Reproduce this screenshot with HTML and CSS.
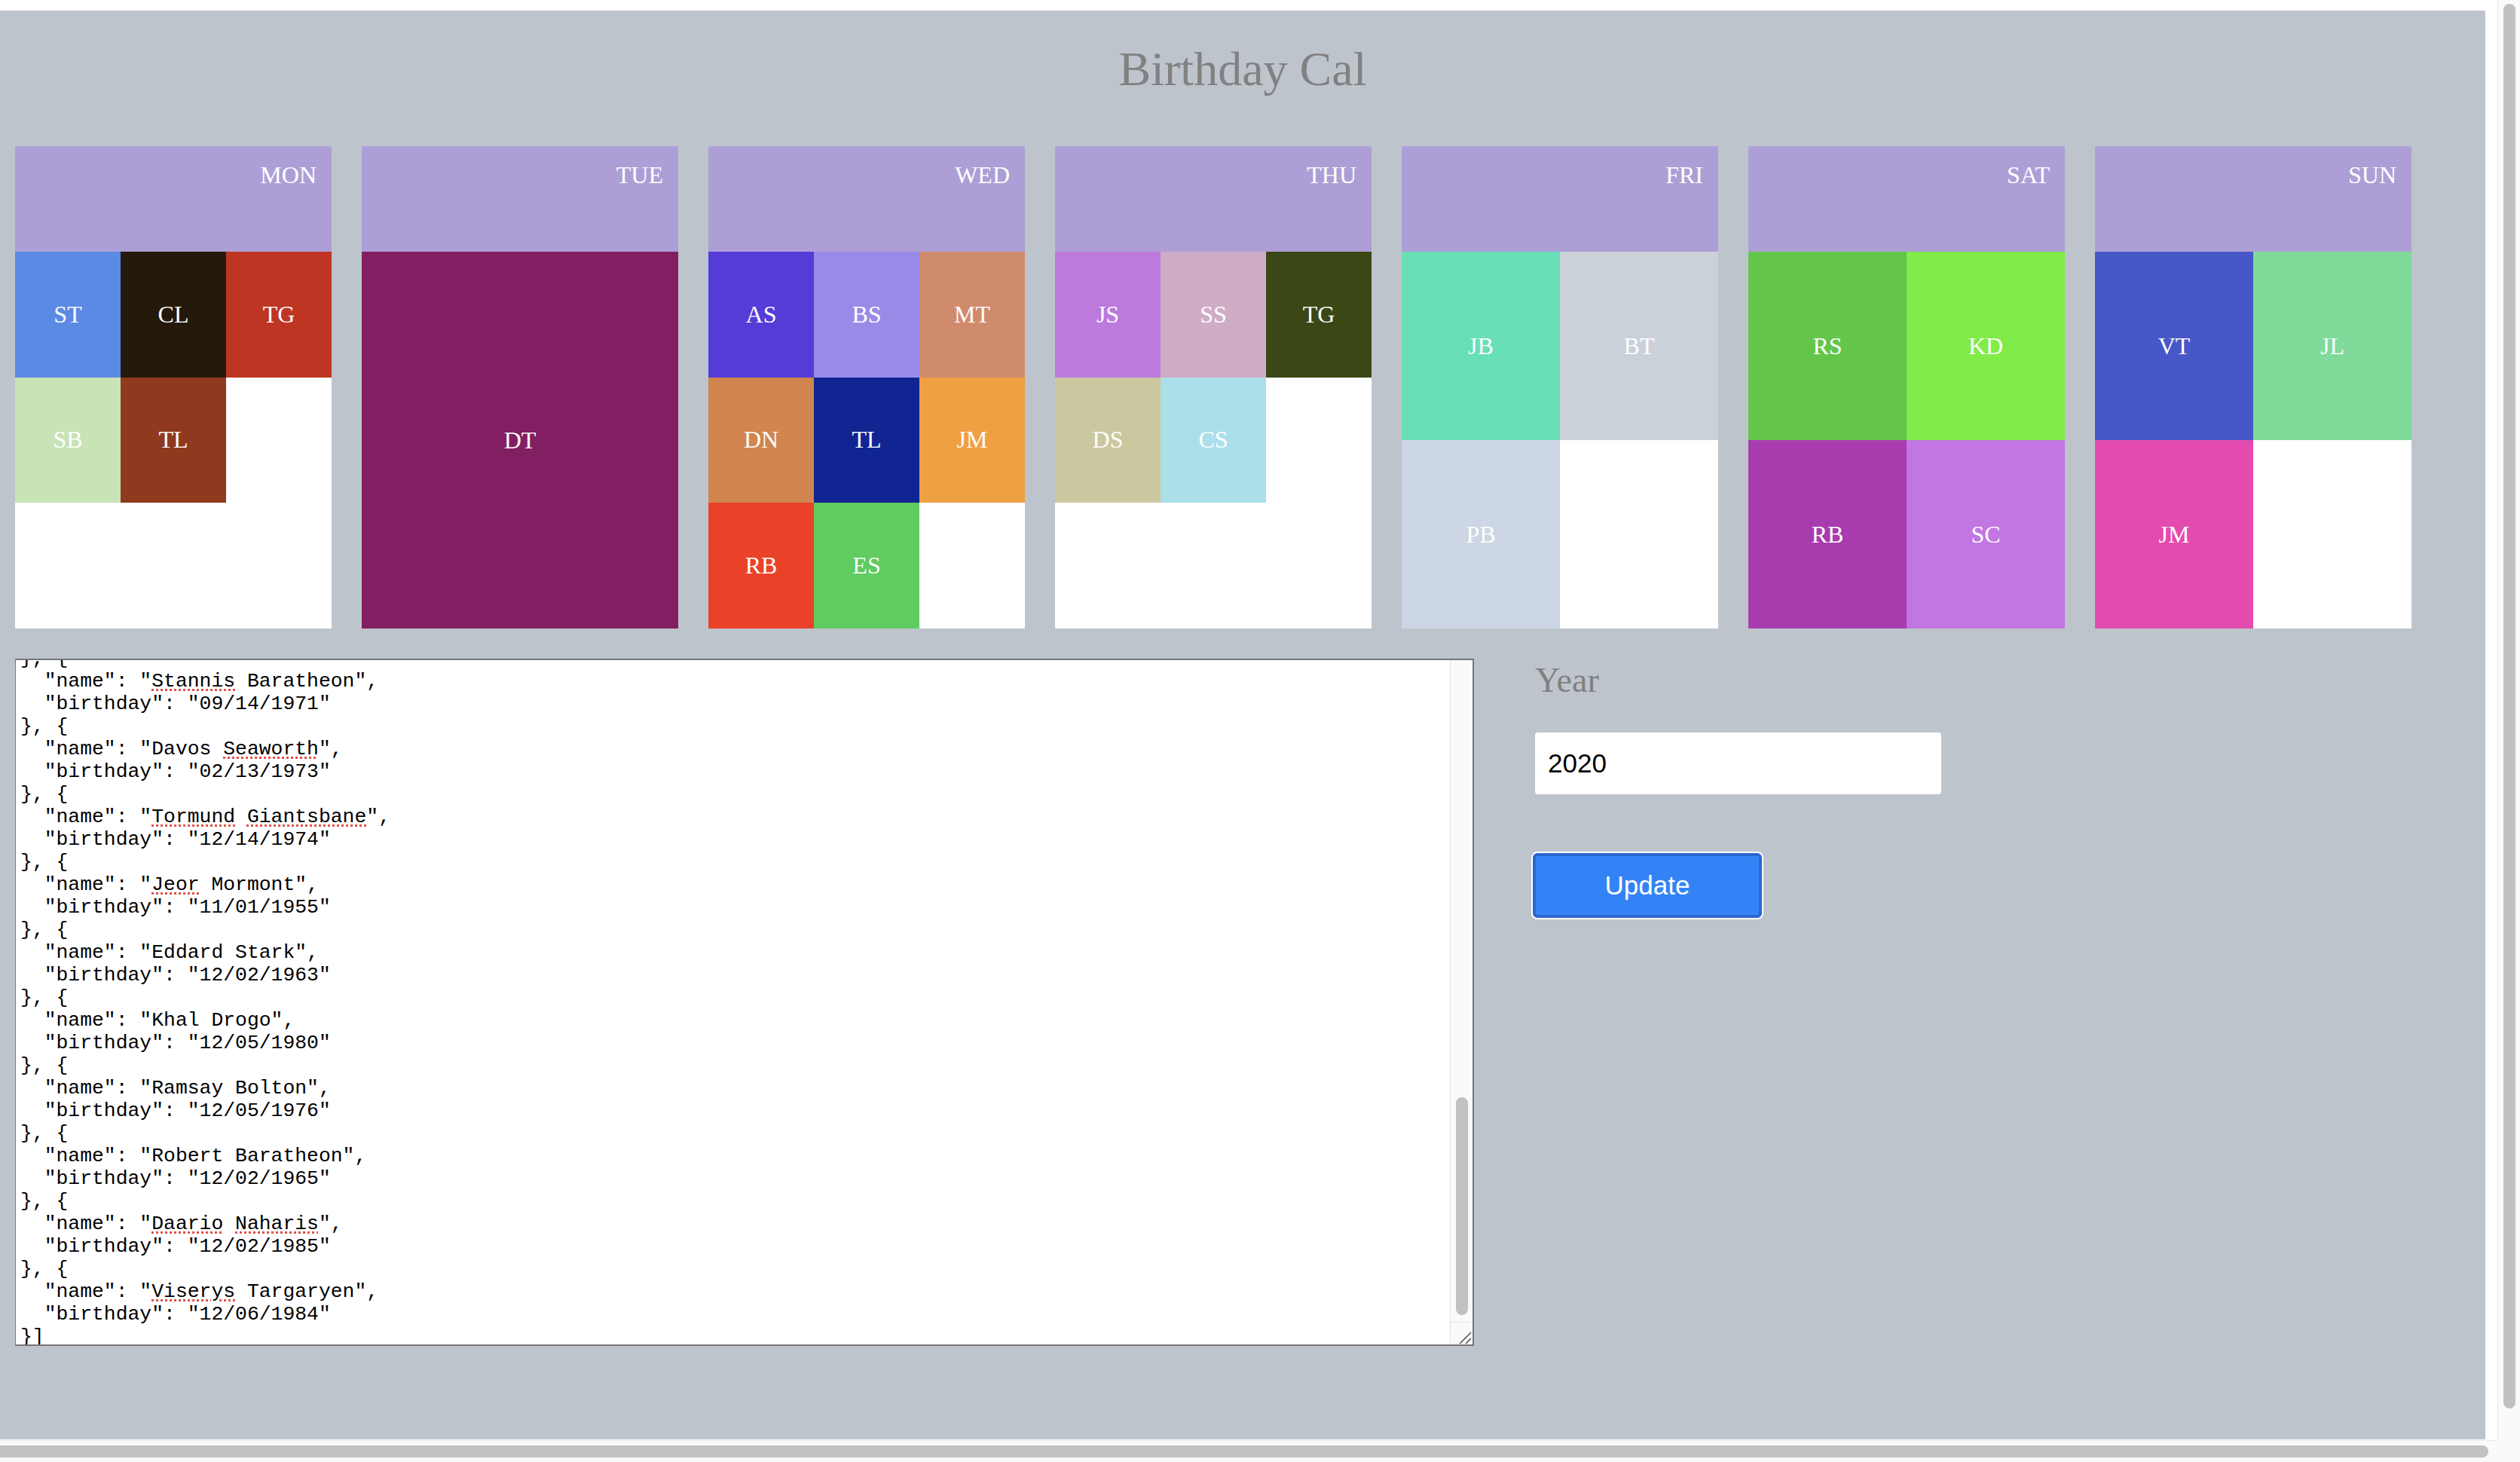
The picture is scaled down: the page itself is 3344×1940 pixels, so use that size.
FILE: index.html
```html
<!DOCTYPE html>
<html lang="en">
<head>
<meta charset="utf-8">
<title>Birthday Cal</title>
<link rel="stylesheet" href="styles.css">
</head>
<body>
<div class="screen">
  <main class="viewport">
    <div class="page">
      <h1 class="title">Birthday Cal</h1>
      <section class="week">
        <div class="day">
          <div class="day-head">MON</div>
          <div class="day-body cols-3">
            <div class="person" style="background:#5b8ae4">ST</div>
            <div class="person" style="background:#24190b">CL</div>
            <div class="person" style="background:#be3524">TG</div>
            <div class="person" style="background:#c8e3b6">SB</div>
            <div class="person" style="background:#8f3a1e">TL</div>
          </div>
        </div>
        <div class="day">
          <div class="day-head">TUE</div>
          <div class="day-body cols-1">
            <div class="person" style="background:#821f62">DT</div>
          </div>
        </div>
        <div class="day">
          <div class="day-head">WED</div>
          <div class="day-body cols-3">
            <div class="person" style="background:#553cd6">AS</div>
            <div class="person" style="background:#9a8ae8">BS</div>
            <div class="person" style="background:#d08b6c">MT</div>
            <div class="person" style="background:#d0864e">DN</div>
            <div class="person" style="background:#102592">TL</div>
            <div class="person" style="background:#eea043">JM</div>
            <div class="person" style="background:#ea4229">RB</div>
            <div class="person" style="background:#5fcb60">ES</div>
          </div>
        </div>
        <div class="day">
          <div class="day-head">THU</div>
          <div class="day-body cols-3">
            <div class="person" style="background:#bb7adc">JS</div>
            <div class="person" style="background:#cfacc6">SS</div>
            <div class="person" style="background:#3b4815">TG</div>
            <div class="person" style="background:#cbc8a0">DS</div>
            <div class="person" style="background:#acdfe9">CS</div>
          </div>
        </div>
        <div class="day">
          <div class="day-head">FRI</div>
          <div class="day-body cols-2">
            <div class="person" style="background:#68dfb6">JB</div>
            <div class="person" style="background:#cbd1d9">BT</div>
            <div class="person" style="background:#cdd6e4">PB</div>
          </div>
        </div>
        <div class="day">
          <div class="day-head">SAT</div>
          <div class="day-body cols-2">
            <div class="person" style="background:#63c64b">RS</div>
            <div class="person" style="background:#81eb49">KD</div>
            <div class="person" style="background:#a83caf">RB</div>
            <div class="person" style="background:#c176e1">SC</div>
          </div>
        </div>
        <div class="day">
          <div class="day-head">SUN</div>
          <div class="day-body cols-2">
            <div class="person" style="background:#4857c8">VT</div>
            <div class="person" style="background:#80da9a">JL</div>
            <div class="person" style="background:#e44bae">JM</div>
          </div>
        </div>
      </section>

      <section class="lower">
        <div class="json">
          <div class="json-text">
<pre class="json-code">}, {
  "name": "<span class="spell">Stannis</span> Baratheon",
  "birthday": "09/14/1971"
}, {
  "name": "Davos <span class="spell">Seaworth</span>",
  "birthday": "02/13/1973"
}, {
  "name": "<span class="spell">Tormund</span> <span class="spell">Giantsbane</span>",
  "birthday": "12/14/1974"
}, {
  "name": "<span class="spell">Jeor</span> Mormont",
  "birthday": "11/01/1955"
}, {
  "name": "Eddard Stark",
  "birthday": "12/02/1963"
}, {
  "name": "Khal Drogo",
  "birthday": "12/05/1980"
}, {
  "name": "Ramsay Bolton",
  "birthday": "12/05/1976"
}, {
  "name": "Robert Baratheon",
  "birthday": "12/02/1965"
}, {
  "name": "<span class="spell">Daario</span> <span class="spell">Naharis</span>",
  "birthday": "12/02/1985"
}, {
  "name": "<span class="spell">Viserys</span> Targaryen",
  "birthday": "12/06/1984"
}]</pre>
          </div>
          <div class="json-scroll">
            <div class="json-thumb"></div>
            <div class="json-corner">
              <svg class="grip" width="29" height="29" viewBox="0 0 29 29">
                <line x1="12" y1="28" x2="27" y2="13" stroke="#555" stroke-width="1.6"/>
                <line x1="20" y1="28" x2="27" y2="21" stroke="#555" stroke-width="1.6"/>
              </svg>
            </div>
          </div>
        </div>

        <div class="controls">
          <label class="year-label" for="year">Year</label>
          <input class="year-input" id="year" type="text" value="2020">
          <button class="update-btn" type="button">Update</button>
        </div>
      </section>
    </div>
  </main>
  <div class="vscroll"><div class="vthumb"></div></div>
  <div class="hscroll"><div class="hthumb"></div></div>
  <div class="corner"></div>
</div>
</body>
</html>
```

FILE: styles.css
```css
html, body {
  margin: 0;
  padding: 0;
  background: #ffffff;
  overflow: hidden;
}

body {
  font-family: "Liberation Serif", "Times New Roman", serif;
}

.screen {
  display: grid;
  grid-template-columns: 3314px 30px;
  grid-template-rows: 1910px 30px;
  width: 3344px;
  height: 1940px;
}

.viewport {
  padding: 14px 16px 0 0;
  overflow: hidden;
}

.page {
  background: #bec4cc;
  height: 1896px;
  padding: 0 20px;
  box-sizing: border-box;
  overflow: hidden;
}

.title {
  margin: 42px 0 0;
  font-size: 64px;
  line-height: 71px;
  font-weight: normal;
  text-align: center;
  color: #818181;
}

.week {
  display: flex;
  gap: 40px;
  margin-top: 67px;
}

.day {
  width: 420px;
  display: flex;
  flex-direction: column;
}

.day-head {
  height: 140px;
  box-sizing: border-box;
  padding: 20px 20px 0;
  background: #ad9fd6;
  color: #ffffff;
  font-size: 32px;
  text-align: right;
}

.day-body {
  height: 500px;
  background: #ffffff;
  display: grid;
}

.cols-1 {
  grid-template-columns: 1fr;
  grid-template-rows: 1fr;
}

.cols-2 {
  grid-template-columns: repeat(2, 1fr);
  grid-template-rows: repeat(2, 1fr);
}

.cols-3 {
  grid-template-columns: repeat(3, 1fr);
  grid-template-rows: repeat(3, 1fr);
}

.person {
  display: flex;
  align-items: center;
  justify-content: center;
  color: #ffffff;
  font-size: 32px;
}

.lower {
  display: flex;
  align-items: flex-start;
  gap: 81px;
  margin-top: 40px;
}

.json {
  width: 1936px;
  flex: none;
  height: 912px;
  box-sizing: border-box;
  border: 2px solid #767676;
  border-left-width: 1px;
  padding-left: 1px;
  background: #ffffff;
  display: flex;
}

.json-text {
  flex: 1;
  display: flex;
  flex-direction: column;
  justify-content: flex-end;
  overflow: hidden;
  padding: 0 3px 0 5px;
}

.json-code {
  margin: 0 0 -5px;
  font-family: "Liberation Mono", "Courier New", monospace;
  font-size: 26.4px;
  line-height: 30px;
  color: #000000;
}

.spell {
  text-decoration: underline dotted #e0524a;
  text-decoration-thickness: 3px;
  text-underline-offset: 3px;
}

.json-scroll {
  width: 30px;
  flex: none;
  box-sizing: border-box;
  border-left: 1px solid #e4e4e4;
  background: #fafafa;
  display: flex;
  flex-direction: column;
}

.json-thumb {
  margin: 580px 0 0 7px;
  width: 16px;
  height: 289px;
  border-radius: 8px;
  background: #c1c1c1;
}

.json-corner {
  margin-top: auto;
  height: 29px;
  border-top: 1px solid #e4e4e4;
}

.grip {
  display: block;
}

.controls {
  display: flex;
  flex-direction: column;
  align-items: flex-start;
  padding-top: 2px;
}

.year-label {
  font-size: 46px;
  color: #808080;
}

.year-input {
  margin-top: 43px;
  width: 539px;
  height: 82px;
  box-sizing: border-box;
  border: none;
  border-radius: 4px;
  padding: 0 17px;
  background: #ffffff;
  font-family: "Liberation Sans", Arial, sans-serif;
  font-size: 35px;
  color: #000000;
  outline: none;
}

.update-btn {
  margin: 76px 0 0 -5px;
  width: 308px;
  height: 90px;
  box-sizing: border-box;
  border: 2px solid #ffffff;
  border-radius: 8px;
  background: #3483f6;
  box-shadow: inset 0 0 0 4px #2a67cc;
  color: #ffffff;
  font-family: "Liberation Sans", Arial, sans-serif;
  font-size: 35px;
  padding: 0;
}

.vscroll {
  background: #fafafa;
  border-left: 1px solid #e8e8e8;
  padding: 5px 0 0 7px;
}

.vthumb {
  width: 16px;
  height: 1864px;
  border-radius: 8px;
  background: #c1c1c1;
}

.hscroll {
  margin-top: 1px;
  border-top: 1px solid #e8e8e8;
  background: #fafafa;
  padding-top: 6px;
}

.hthumb {
  width: 3302px;
  height: 16px;
  border-radius: 0 8px 8px 0;
  background: #c1c1c1;
}

.corner {
  background: #fafafa;
}
```
